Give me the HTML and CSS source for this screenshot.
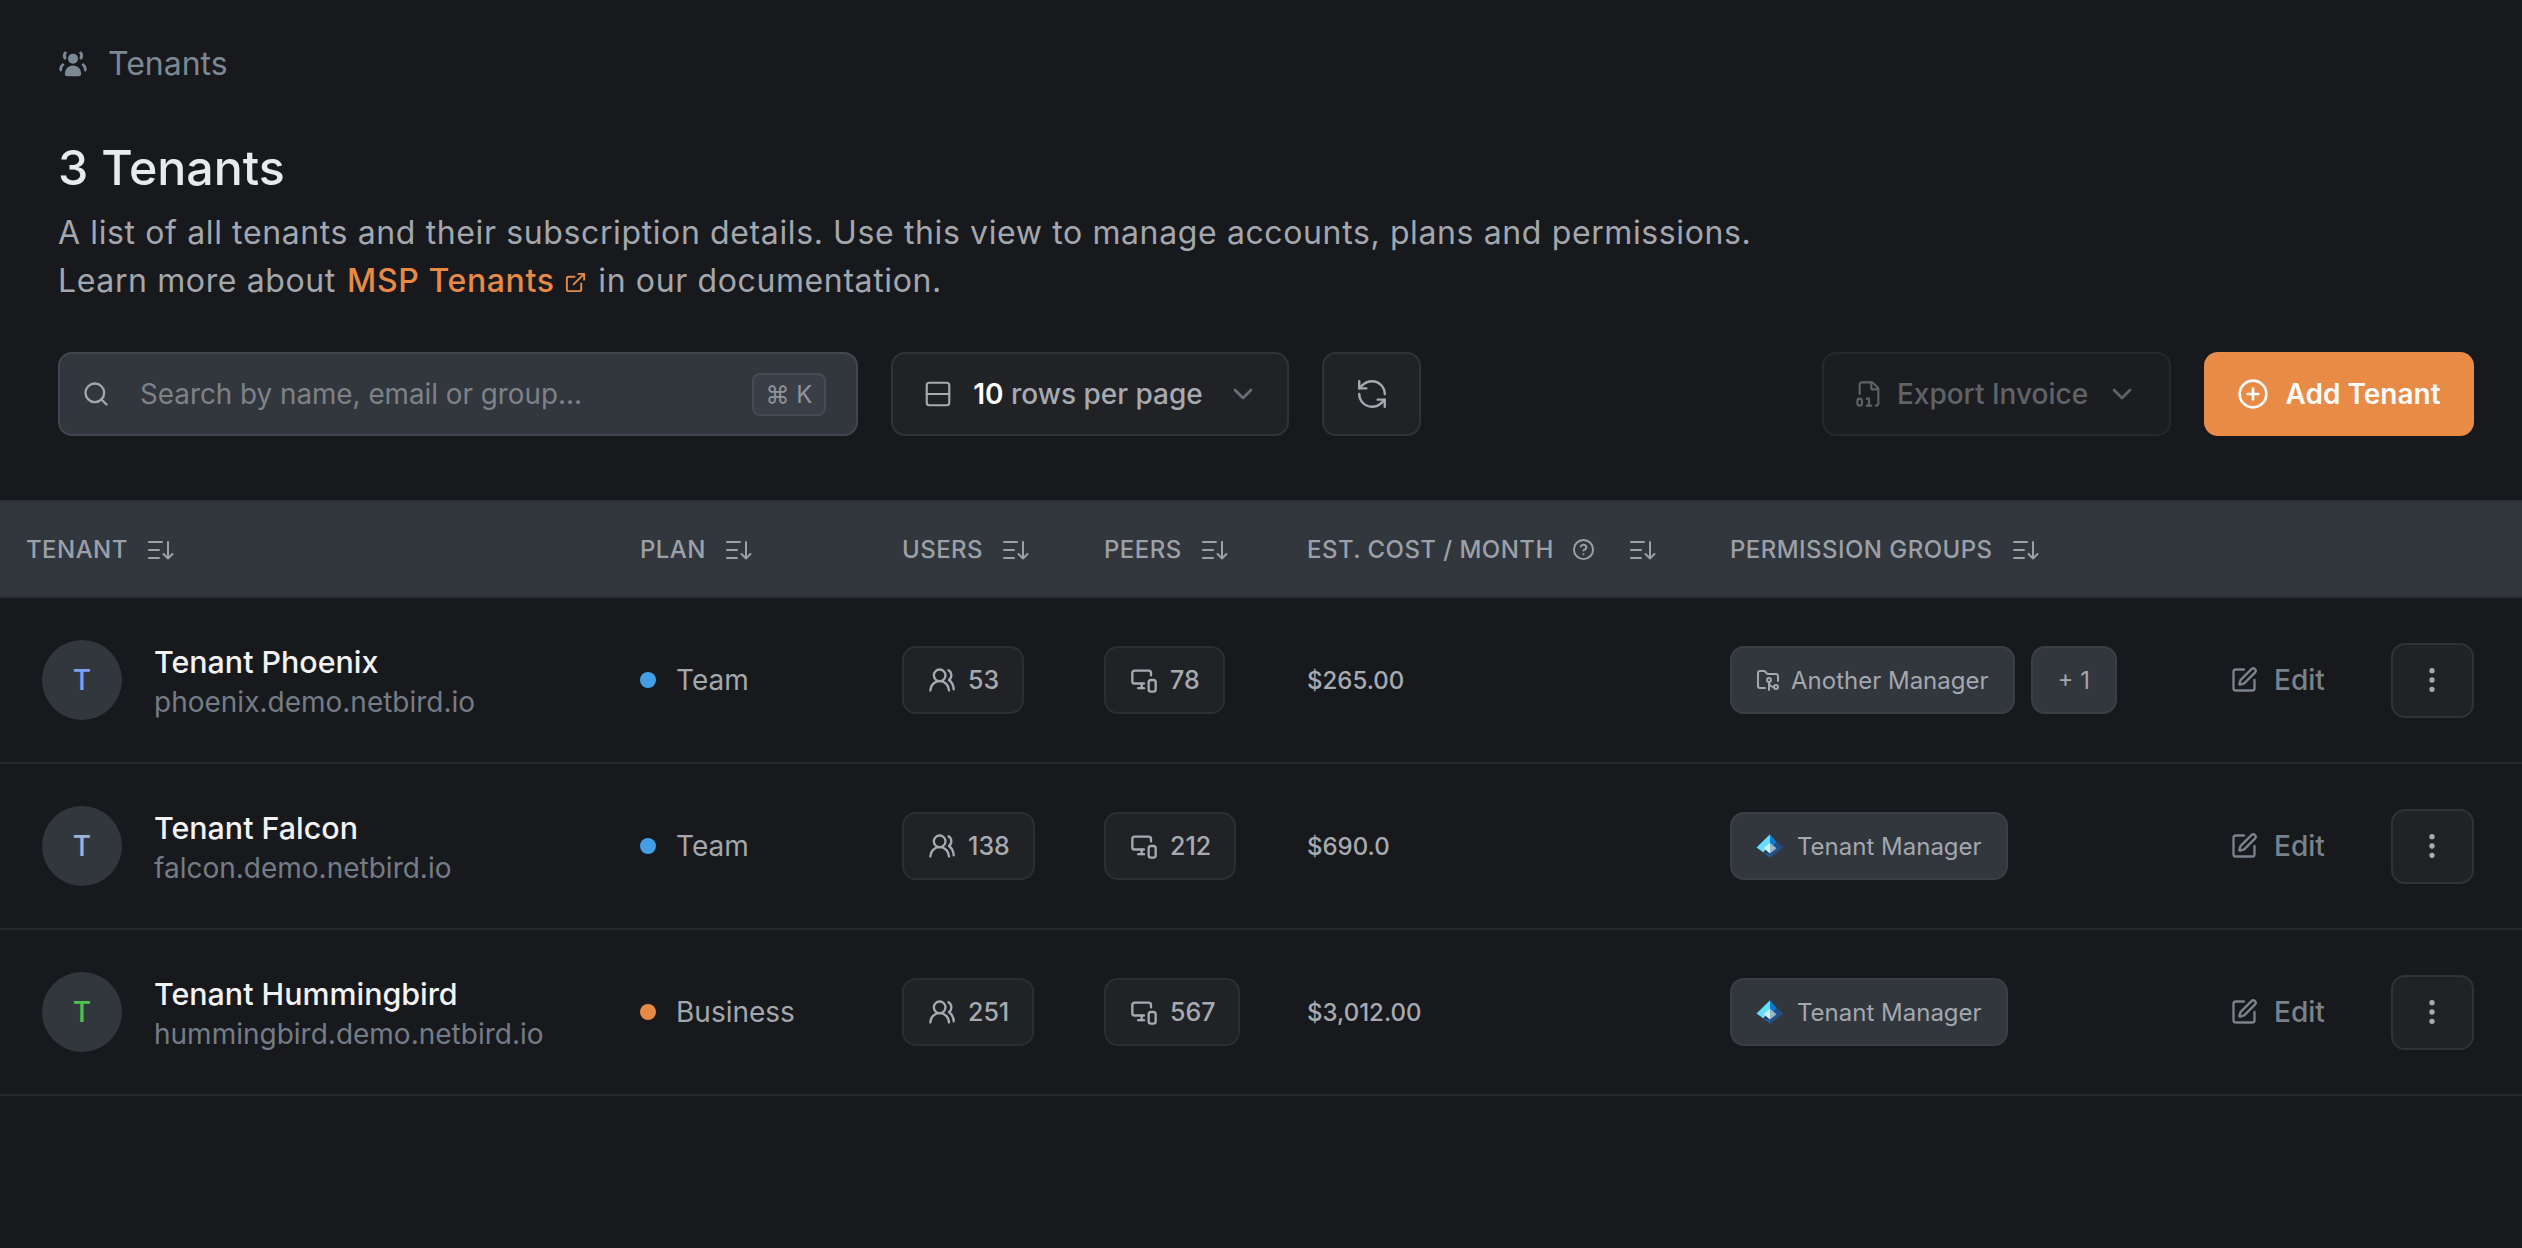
FILE: index.html
```html
<!DOCTYPE html>
<html lang="en">
<head>
<meta charset="utf-8">
<title>Tenants</title>
<link rel="stylesheet" href="styles.css">
</head>
<body>
<svg class="defs" width="0" height="0" aria-hidden="true">
  <symbol id="sort" viewBox="0 0 28 24"><path d="M2 4h13M2 12h10M2 20h10M21 4v16.500M16.500 16 21 20.500l4.500-4.500"/></symbol>
  <symbol id="chev" viewBox="0 0 24 24"><path d="m6 9 6 6 6-6"/></symbol>
  <symbol id="users" viewBox="0 0 24 24"><path d="M18 21a8 8 0 0 0-16 0"/><circle cx="10" cy="8" r="5"/><path d="M22 20c0-3.37-2-6.5-4-8a5 5 0 0 0-.45-8.3"/></symbol>
  <symbol id="peers" viewBox="0 0 24 24"><path d="M18 8V6a2 2 0 0 0-2-2H4a2 2 0 0 0-2 2v7a2 2 0 0 0 2 2h8"/><path d="M10 19v-3.96 3.15"/><path d="M7 19h5"/><rect x="16" y="12" width="6" height="10" rx="2"/></symbol>
  <symbol id="pen" viewBox="0 0 24 24"><path d="M12 3H5a2 2 0 0 0-2 2v14a2 2 0 0 0 2 2h14a2 2 0 0 0 2-2v-7"/><path d="M18.375 2.625a1 1 0 0 1 3 3l-9.013 9.014a2 2 0 0 1-.853.505l-2.873.84a.5.5 0 0 1-.62-.62l.84-2.873a2 2 0 0 1 .506-.852z"/></symbol>
  <symbol id="dots" viewBox="0 0 24 24"><circle cx="12" cy="5" r="1"/><circle cx="12" cy="12" r="1"/><circle cx="12" cy="19" r="1"/></symbol>
  <symbol id="entra" viewBox="0 0 26 24"><path fill="#225086" d="M13 23 25.500 13.500 19 8 13 16z"/><path fill="#0a7bd6" d="M13 1 19 8 13 16z"/><path fill="#6df" d="M13 1 .5 13.500 7 18 13 9z"/><path fill="#cbf1ff" d="M13 9 7 14 13 19z"/><path fill="#96b9c6" d="M13 9 19 14 13 19z"/><path fill="#1a63a8" d="M7 18 13 23 13 19z"/></symbol>
</svg>

<main class="page">
  <nav class="crumb">
    <svg class="crumb-icon" viewBox="0 0 24 24"><circle cx="12" cy="8.500" r="4"/><path d="M5.500 21c0-4 2.500-7 6.500-7s6.500 3 6.500 7c0 1-1 1.500-2 1.500h-9c-1 0-2-.5-2-1.500z"/><path d="M5.700 2.500C3.500 4 3.300 7.700 5.500 9.500L7 8c-1-1-1-3 .3-4.200zM18.300 2.500c2.200 1.500 2.400 5.200.2 7L17 8c1-1 1-3-.3-4.200zM1 17.500c0-2.700 1-4.500 3-5.500l1.300 1.600C3.800 14.500 3.200 16 3.200 18l-1 .9zM23 17.500c0-2.700-1-4.500-3-5.500l-1.300 1.600c1.500.9 2.100 2.400 2.100 4.400l1 .9z"/></svg>
    <span>Tenants</span>
  </nav>

  <header class="intro">
    <h1>3 Tenants</h1>
    <p>A list of all tenants and their subscription details. Use this view to manage accounts, plans and permissions.<br>Learn more about <a class="doc-link">MSP Tenants <svg class="ext" viewBox="0 0 24 24"><path d="M18 13v6a2 2 0 0 1-2 2H5a2 2 0 0 1-2-2V8a2 2 0 0 1 2-2h6"/><path d="M15 3h6v6M10 14 21 3"/></svg></a> in our documentation.</p>
  </header>

  <section class="toolbar">
    <label class="search">
      <svg class="ic ic-search" viewBox="0 0 24 24"><circle cx="11" cy="11" r="8"/><path d="m21 21-4.300-4.300"/></svg>
      <span class="search-text">Search by name, email or group...</span>
      <kbd>⌘ K</kbd>
    </label>
    <button class="btn btn-rows">
      <svg class="ic ic-rows" viewBox="0 0 24 24"><rect x="3" y="3" width="18" height="18" rx="2"/><path d="M3 12h18"/></svg>
      <span><b>10</b> rows per page</span>
      <svg class="ic chev dim"><use href="#chev"/></svg>
    </button>
    <button class="btn btn-refresh">
      <svg class="ic ic-refresh" viewBox="0 0 24 24"><path d="M21 12a9 9 0 0 0-9-9 9.750 9.750 0 0 0-6.740 2.740L3 8"/><path d="M3 3v5h5"/><path d="M3 12a9 9 0 0 0 9 9 9.750 9.750 0 0 0 6.740-2.740L21 16"/><path d="M16 16h5v5"/></svg>
    </button>
    <span class="spacer"></span>
    <button class="btn btn-export">
      <svg class="ic ic-file" viewBox="0 0 24 24"><path d="M4 12V4a2 2 0 0 1 2-2h8a2.400 2.400 0 0 1 1.706.706l3.588 3.588A2.400 2.400 0 0 1 20 8v12a2 2 0 0 1-2 2"/><path d="M14 2v5a1 1 0 0 0 1 1h5"/><path d="M10 16h2v6"/><path d="M10 22h4"/><rect x="2" y="16" width="4" height="6" rx="2"/></svg>
      <span>Export Invoice</span>
      <svg class="ic chev"><use href="#chev"/></svg>
    </button>
    <button class="btn btn-add">
      <svg class="ic ic-plus" viewBox="0 0 24 24"><circle cx="12" cy="12" r="10"/><path d="M8 12h8M12 8v8"/></svg>
      <span>Add Tenant</span>
    </button>
  </section>

  <section class="table">
    <div class="row head">
      <div class="cell first"><span>Tenant</span><svg class="sort"><use href="#sort"/></svg></div>
      <div class="cell"><span>Plan</span><svg class="sort"><use href="#sort"/></svg></div>
      <div class="cell"><span>Users</span><svg class="sort"><use href="#sort"/></svg></div>
      <div class="cell"><span>Peers</span><svg class="sort"><use href="#sort"/></svg></div>
      <div class="cell"><span>Est. Cost / Month</span><svg class="help" viewBox="0 0 24 24"><circle cx="12" cy="12" r="10"/><path d="M9.090 9a3 3 0 0 1 5.830 1c0 2-3 3-3 3"/><path d="M12 17h.01"/></svg><svg class="sort sort-wide"><use href="#sort"/></svg></div>
      <div class="cell"><span>Permission Groups</span><svg class="sort"><use href="#sort"/></svg></div>
      <div class="cell"></div>
    </div>

    <div class="row">
      <div class="cell tenant"><span class="avatar a-blue">T</span><div class="who"><div class="name">Tenant Phoenix</div><div class="host">phoenix.demo.netbird.io</div></div></div>
      <div class="cell plan"><i class="dot d-blue"></i>Team</div>
      <div class="cell"><span class="chip"><svg class="ic"><use href="#users"/></svg>53</span></div>
      <div class="cell"><span class="chip"><svg class="ic"><use href="#peers"/></svg>78</span></div>
      <div class="cell cost">$265.00</div>
      <div class="cell groups"><span class="group"><svg class="ic ic-folder" viewBox="0 0 24 24"><path d="M9 20H4a2 2 0 0 1-2-2V5a2 2 0 0 1 2-2h3.900a2 2 0 0 1 1.690.9l.81 1.200a2 2 0 0 0 1.670.9H20a2 2 0 0 1 2 2v5"/><circle cx="13" cy="12" r="2"/><path d="M18 19c-2.800 0-5-2.200-5-5v8"/><circle cx="20" cy="19" r="2"/></svg>Another Manager</span><span class="group more-groups">+ 1</span></div>
      <div class="cell actions"><span class="edit"><svg class="ic"><use href="#pen"/></svg>Edit</span><button class="kebab"><svg class="ic dots"><use href="#dots"/></svg></button></div>
    </div>

    <div class="row">
      <div class="cell tenant"><span class="avatar a-slate">T</span><div class="who"><div class="name">Tenant Falcon</div><div class="host">falcon.demo.netbird.io</div></div></div>
      <div class="cell plan"><i class="dot d-blue"></i>Team</div>
      <div class="cell"><span class="chip"><svg class="ic"><use href="#users"/></svg>138</span></div>
      <div class="cell"><span class="chip"><svg class="ic"><use href="#peers"/></svg>212</span></div>
      <div class="cell cost">$690.0</div>
      <div class="cell groups"><span class="group"><svg class="entra"><use href="#entra"/></svg>Tenant Manager</span></div>
      <div class="cell actions"><span class="edit"><svg class="ic"><use href="#pen"/></svg>Edit</span><button class="kebab"><svg class="ic dots"><use href="#dots"/></svg></button></div>
    </div>

    <div class="row">
      <div class="cell tenant"><span class="avatar a-green">T</span><div class="who"><div class="name">Tenant Hummingbird</div><div class="host">hummingbird.demo.netbird.io</div></div></div>
      <div class="cell plan"><i class="dot d-orange"></i>Business</div>
      <div class="cell"><span class="chip"><svg class="ic"><use href="#users"/></svg>251</span></div>
      <div class="cell"><span class="chip"><svg class="ic"><use href="#peers"/></svg>567</span></div>
      <div class="cell cost">$3,012.00</div>
      <div class="cell groups"><span class="group"><svg class="entra"><use href="#entra"/></svg>Tenant Manager</span></div>
      <div class="cell actions"><span class="edit"><svg class="ic"><use href="#pen"/></svg>Edit</span><button class="kebab"><svg class="ic dots"><use href="#dots"/></svg></button></div>
    </div>
  </section>
</main>
</body>
</html>
```
FILE: styles.css
```css
* { box-sizing: border-box; }
html, body { margin: 0; height: 100%; }
body { background: #18191d; color: #e4e7e9; font-family: Inter, "Liberation Sans", sans-serif; overflow: hidden; }
.defs { position: absolute; }
svg { fill: none; stroke: currentColor; stroke-width: 2; stroke-linecap: round; stroke-linejoin: round; flex: none; display: block; }
button { font: inherit; color: inherit; cursor: pointer; }

.page { display: flex; flex-direction: column; }

.crumb { display: flex; align-items: center; gap: 20px; padding: 44px 58px 0; height: 82px; font-size: 32px; color: #7c8994; }
.crumb-icon { width: 30px; height: 30px; fill: #7c8994; stroke: none; }

.intro { padding: 59px 58px 0; }
.intro h1 { margin: 0; font-size: 48.300px; line-height: 54px; font-weight: 500; color: #e8eaed; }
.intro p { margin: 14px 0 0; font-size: 32px; line-height: 48px; letter-spacing: .62px; color: #a3a7ae; font-weight: 400; }
.doc-link { color: #e68a45; font-weight: 500; margin-left: 1.500px; }
.ext { display: inline-block; width: 23px; height: 23px; vertical-align: -2px; margin-right: 2px; }

.toolbar { display: flex; align-items: stretch; gap: 33px; padding: 47px 48px 0 58px; height: 131px; }
.spacer { flex: 1; }
.search { width: 800px; display: flex; align-items: center; background: #32363d; border: 2px solid #42464e; border-radius: 14px; padding: 0 30px 0 22px; font-size: 27.800px; color: #7e8288; }
.ic-search { width: 32px; height: 32px; color: #a3a7ae; margin-right: 30px; }
.search-text { flex: 1; }
kbd { font: inherit; font-size: 24px; color: #8f949b; background: #3a3e46; border: 2px solid #474b53; border-radius: 8px; height: 43px; width: 74px; display: flex; align-items: center; justify-content: center; }

.btn { display: flex; align-items: center; justify-content: center; border-radius: 14px; border: 2px solid #2f3238; background: #212226; font-size: 28px; font-weight: 500; color: #a7abb1; padding: 0; }
.ic { width: 28px; height: 28px; }
.btn-rows { width: 398px; gap: 20px; padding-left: 2px; }
.btn-rows b { color: #fff; font-weight: 600; }
.ic-rows { width: 30px; height: 30px; stroke-width: 1.700; }
.chev { width: 32px; height: 32px; margin-left: 4px; }
.dim { color: #6a6e74; }
.btn-refresh { width: 99px; }
.ic-refresh { width: 34px; height: 34px; stroke-width: 1.700; }
.btn-export { width: 349px; gap: 14px; background: #1c1d21; border-color: #26282d; color: #5f6368; }
.ic-file { width: 28px; height: 28px; stroke-width: 1.800; }
.btn-add { width: 270px; gap: 16px; background: #e78b47; border: 0; color: #fdfdfd; font-weight: 600; }
.ic-plus { width: 32px; height: 32px; }

.table { margin-top: 64px; }
.row { display: grid; grid-template-columns: 640px 262px 202px 203px 423px 500px 292px; align-items: center; height: 166px; border-bottom: 2px solid #26282d; }
.cell { display: flex; align-items: center; min-width: 0; }
.first { padding-left: 26px; }
.head { height: 98px; padding-top: 1px; background: #32363d; border-top: 2px solid #2c2f35; border-bottom: 2px solid #2c2f35; font-size: 24px; font-weight: 500; letter-spacing: .45px; color: #9ca0a8; text-transform: uppercase; }
.sort { width: 28px; height: 24px; margin-left: 19px; }
.help { width: 23px; height: 23px; margin-left: 18px; }
.sort-wide { margin-left: 34px; }

.tenant { padding-left: 42px; gap: 32px; }
.avatar { width: 80px; height: 80px; border-radius: 50%; background: #32363d; display: flex; align-items: center; justify-content: center; font-size: 28px; font-weight: 500; flex: none; }
.a-blue { color: #7f9ff0; }
.a-slate { color: #9db3d8; }
.a-green { color: #4cc14c; }
.who { padding-top: 4px; }
.name { font-size: 30.400px; line-height: 40px; font-weight: 500; color: #f2f3f5; }
.host { font-size: 28px; line-height: 40px; color: #747c86; }

.plan { font-size: 28px; color: #a3a7ae; gap: 20px; }
.dot { width: 16px; height: 16px; border-radius: 50%; }
.d-blue { background: #439fe6; }
.d-orange { background: #e68a45; }

.chip { display: inline-flex; align-items: center; gap: 12px; height: 68px; padding: 0 23px 0 24px; background: #212226; border: 2px solid #2c2e33; border-radius: 14px; font-size: 25px; font-weight: 500; color: #a7abb1; }
.cost { font-size: 24px; font-weight: 500; color: #a7abb1; }

.groups { gap: 16px; }
.group { display: inline-flex; align-items: center; height: 68px; padding: 0 24px; background: #32363d; border: 2px solid #3a3e45; border-radius: 14px; font-size: 24px; color: #a3a7ae; gap: 11px; }
.group .ic-folder { width: 24px; height: 24px; }
.entra { width: 28px; height: 26px; stroke: none; margin-right: 2px; }
.more-groups { padding: 0 25px; }

.actions { justify-content: flex-end; padding-right: 48px; gap: 66px; }
.edit { display: flex; align-items: center; gap: 16px; font-size: 28px; font-weight: 500; color: #7a828c; }
.edit .ic { width: 28px; height: 28px; }
.kebab { width: 84px; height: 75px; display: flex; align-items: center; justify-content: center; background: #212226; border: 2px solid #2f3238; border-radius: 14px; color: #a7abb1; padding: 0; }
.dots { width: 32px; height: 32px; stroke-width: 2; }
```
